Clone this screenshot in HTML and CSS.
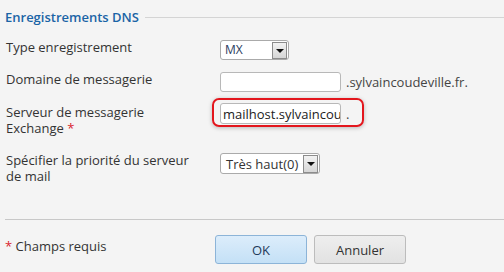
FILE: index.html
```html
<!DOCTYPE html>
<html lang="fr">
<head>
    <meta charset="UTF-8">
    <title>Enregistrements DNS</title>
    <link rel="stylesheet" href="styles.css">
</head>
<body>
    <div class="panel">
        <div class="legend">
            <span class="legend-title">Enregistrements DNS</span>
            <span class="legend-line"></span>
        </div>

        <div class="form">
            <div class="row">
                <label class="label">Type enregistrement</label>
                <div class="field">
                    <div class="select select-type">
                        <span class="select-value">MX</span>
                        <span class="select-arrow"></span>
                    </div>
                </div>
            </div>

            <div class="row row-short">
                <label class="label">Domaine de messagerie</label>
                <div class="field">
                    <div class="input"></div>
                    <span class="suffix">.sylvaincoudeville.fr.</span>
                </div>
            </div>

            <div class="row row-tall">
                <label class="label">Serveur de messagerie<br>Exchange <span class="required">*</span></label>
                <div class="field">
                    <div class="highlight">
                        <div class="input"><span class="input-value">mailhost.sylvaincou</span></div>
                        <span class="suffix">.</span>
                    </div>
                </div>
            </div>

            <div class="row">
                <label class="label">Spécifier la priorité du serveur de mail</label>
                <div class="field">
                    <div class="select select-priority">
                        <span class="select-value">Très haut(0)</span>
                        <span class="select-arrow"></span>
                    </div>
                </div>
            </div>
        </div>

        <div class="footer">
            <div class="required-note"><span class="required">*</span> Champs requis</div>
            <div class="buttons">
                <button class="btn btn-ok">OK</button>
                <button class="btn btn-cancel">Annuler</button>
            </div>
        </div>
    </div>
</body>
</html>
```

FILE: styles.css
```css
body {
    margin: 0;
    background-color: #f4f4f4;
    font-family: 'Open Sans', 'DejaVu Sans', sans-serif;
    font-size: 13px;
    color: #333333;
}

.panel {
    padding: 8px 0 0 5px;
}

/* Titre de la section avec sa ligne */
.legend {
    display: flex;
    align-items: center;
    height: 18px;
}

.legend-title {
    color: #1b64a6;
    font-size: 13px;
    font-weight: 600;
}

.legend-line {
    flex: 1;
    height: 1px;
    margin-left: 6px;
    background-color: #d4d4d4;
}

.form {
    padding-top: 13px;
}

.row {
    display: grid;
    grid-template-columns: 215px 1fr;
    align-items: start;
    margin-bottom: 11px;
    line-height: 16px;
}

.row-short {
    margin-bottom: 10px;
}

.row-tall {
    margin-bottom: 16px;
}

.row-tall .label {
    padding-top: 2px;
}

.label {
    padding-left: 1px;
    width: 200px;
}

.required {
    color: #d9232d;
}

.field {
    display: flex;
    align-items: center;
    padding-top: 1px;
}

.input {
    width: 119px;
    height: 18px;
    background-color: #ffffff;
    border: 1px solid #b8b8b8;
    border-radius: 3px;
    overflow: hidden;
    white-space: nowrap;
}

.row-tall .input {
    height: 19px;
}

.input-value {
    display: block;
    padding: 1px 0 0 2px;
    font-size: 13px;
    line-height: 18px;
    color: #222222;
}

.suffix {
    margin-left: 5px;
    color: #444444;
}

/* Encadré rouge d'annotation */
.highlight {
    position: relative;
    display: flex;
    align-items: center;
}

.highlight::before {
    content: "";
    position: absolute;
    top: -5px;
    bottom: -3px;
    left: -8px;
    right: -15px;
    border: 2px solid #e3161d;
    border-radius: 7px;
    box-shadow: 0 1px 4px rgba(0, 0, 0, 0.25);
}

.select {
    display: flex;
    align-items: center;
    justify-content: space-between;
    height: 18px;
    background-color: #ffffff;
    border: 1px solid #aaaaaa;
    border-radius: 3px;
    padding-left: 4px;
}

.select-type {
    width: 63px;
}

.select-priority {
    width: 94px;
    height: 19px;
}

.select-type .select-value {
    font-size: 12px;
    color: #2a3c60;
}

.select-priority .select-value {
    font-size: 13px;
    padding-left: 1px;
}

.select-arrow {
    position: relative;
    width: 13px;
    height: 15px;
    margin-right: 1px;
    background: linear-gradient(#f2f2f2, #d6d6d6);
    border: 1px solid #8c8c8c;
}

.select-priority .select-arrow {
    height: 16px;
}

.select-arrow::after {
    content: "";
    position: absolute;
    left: 3px;
    top: 6px;
    border-left: 4px solid transparent;
    border-right: 4px solid transparent;
    border-top: 4px solid #111111;
}

/* Pied du formulaire */
.footer {
    margin-top: 35px;
    border-top: 1px solid #c8c8c8;
    display: grid;
    grid-template-columns: 210px 1fr;
    padding-top: 15px;
}

.required-note {
    padding-top: 2px;
}

.buttons {
    display: flex;
    gap: 7px;
}

.btn {
    width: 92px;
    height: 29px;
    border-radius: 3px;
    font-family: 'Open Sans', 'DejaVu Sans', sans-serif;
    font-size: 13px;
    color: #333333;
}

.btn-ok {
    background: linear-gradient(#dcedfb, #c4e0f6);
    border: 1px solid #8cb4d8;
    color: #233a5a;
}

.btn-cancel {
    background: linear-gradient(#eeeeee, #e2e2e2);
    border: 1px solid #bcbcbc;
}
```
